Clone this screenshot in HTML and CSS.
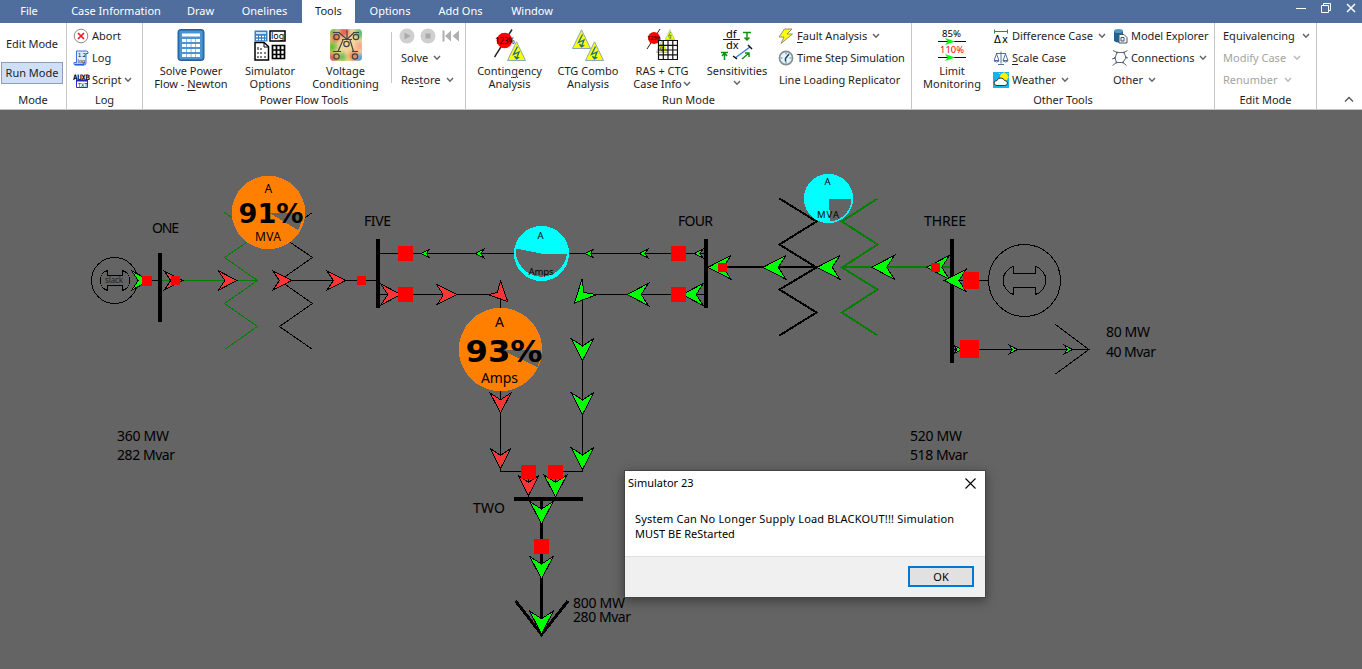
FILE: index.html
```html
<!DOCTYPE html>
<html lang="en">
<head>
<meta charset="utf-8">
<title>Simulator 23</title>
<link rel="stylesheet" href="styles.css">
</head>
<body>
<svg class="defs" width="0" height="0">
  <defs>
    <symbol id="chev" viewBox="0 0 8 6"><path d="M1 1 4 4.2 7 1" fill="none" stroke="currentColor" stroke-width="1.5"/></symbol>
    <symbol id="bolt" viewBox="0 0 19 20"><path d="M9.5.8 18.5 19.5H.5Z" fill="#ff0" stroke="#8aa7b5"/><path d="M10.500 5.500 6.500 13.500 12 11 9.500 17.500M7.500 15 9.500 17.800l2.800-1.600" fill="none" stroke="#246a86" stroke-width="1.300"/></symbol>
  </defs>
</svg>
<div class="app">
  <nav class="tabs">
    <div class="tab t-file">File</div>
    <div class="tab t-case">Case Information</div>
    <div class="tab t-draw">Draw</div>
    <div class="tab t-one">Onelines</div>
    <div class="tab t-tools active">Tools</div>
    <div class="tab t-opt">Options</div>
    <div class="tab t-add">Add Ons</div>
    <div class="tab t-win">Window</div>
    <svg class="winctl" width="66" height="23" viewBox="0 0 66 23" fill="none" stroke="#fff"><path d="M0 8.500H10M25.500 5.500h7v7h-7zM27.500 5V3.500h7v7H33"/><path d="m51 4 8 8m0-8-8 8" stroke-width="1.500"/></svg>
  </nav>
  <div class="ribbon">
    <section class="group g-mode">
      <div class="body modes">
        <div class="mode">Edit Mode</div>
        <div class="mode on">Run Mode</div>
      </div>
      <div class="title">Mode</div>
    </section>
    <section class="group g-log">
      <div class="body">
        <div class="rows c-log">
          <div class="row"><svg width="16" height="16"><circle cx="8" cy="8" r="6.800" fill="#fff" stroke="#888"/><path d="m5 5 6 6m0-6-6 6" stroke="#f01820" stroke-width="1.700"/></svg><span>Abort</span></div>
          <div class="row"><svg width="16" height="16"><path d="M3.500 1h10q2 0 1.500 2.500h-2V13q0 2-2 2H2q-1.500 0-1-2.500h2.500z" fill="#dfe9ff" stroke="#3b6fe0"/><path d="M2 14.500h9" stroke="#2b5fd8" stroke-width="1.500"/><text x="5" y="7" class="mini">1.2</text><text x="4.500" y="13" class="mini">log</text></svg><span>Log</span></div>
          <div class="row tight"><svg width="18" height="16"><text x="0" y="7.500" class="aux" textLength="17">AUXB</text><path d="M3.500 8.500h11v7h-11z" fill="#fff" stroke="#33c"/><path d="M3 8.500h12" stroke="#22c" stroke-width="2"/><text x="5" y="14.500" class="mini">TXT</text></svg><span>Script</span><svg class="chev" width="8" height="6"><use href="#chev"/></svg></div>
        </div>
      </div>
      <div class="title">Log</div>
    </section>
    <section class="group g-power">
      <div class="body">
        <div class="big b-solve">
          <svg width="32" height="32"><rect x="3" y=".5" width="26" height="31" rx="2.500" fill="#2f76b8" stroke="#25609a"/><rect x="4.500" y="2" width="23" height="28" rx="1" fill="#4d94d2"/><path d="M7 4.500h18v3H7zM7 10h4v3H7zm4.700 0h4v3h-4zm4.700 0h4v3h-4zm4.600 0h4v3h-4zM7 15h4v3H7zm4.700 0h4v3h-4zm4.700 0h4v3h-4zm4.600 0h4v3h-4zM7 20h4v3H7zm4.700 0h4v3h-4zm4.700 0h4v3h-4zm4.600 0h4v3h-4zM7 25h4v3H7zm4.700 0h4v3h-4zm4.700 0h4v3h-4zm4.600 0h4v3h-4z" fill="#fff"/></svg>
          <span>Solve Power</span><span>Flow - <u>N</u>ewton</span>
        </div>
        <div class="big b-sim">
          <svg width="32" height="32"><rect x=".5" y="1.500" width="13" height="11" fill="#3b80c3"/><path d="M2 4h10" stroke="#fff" stroke-width="1.500"/><path d="M2 7.500h10M2 10.500h10" stroke="#fff" stroke-width="1.500" stroke-dasharray="2 1"/><rect x="16" y="2" width="15" height="10" fill="#fff" stroke="#000" stroke-width="1.500"/><text x="17" y="9.500" class="logtxt">log</text><path d="M1 13.500h9l4.500 4V31H1z" fill="#fff" stroke="#000" stroke-width="1.500"/><path d="M10 13.500v4.500h4.500" fill="none" stroke="#000"/><path d="M4 18v3m3-2v2M4 23v2m3-2v2m4-2v2M4 27v2m3-2v2m4-2v2" stroke="#000"/><path d="M18.500 16.500h12v13h-12zM22.500 16v14M26.500 16v14M18 21h13M18 25.500h13" fill="none" stroke="#000" stroke-width="1.700"/></svg>
          <span>Simulator</span><span>Options</span>
        </div>
        <div class="big b-volt">
          <svg width="32" height="32"><defs><filter id="vb" x="-50%" y="-50%" width="200%" height="200%"><feGaussianBlur stdDeviation="2"/></filter><clipPath id="vc"><rect width="32" height="32" rx="4"/></clipPath></defs><g clip-path="url(#vc)"><rect width="32" height="32" fill="#f3d79a"/><g filter="url(#vb)"><circle cx="2" cy="18" r="5" fill="#5cbf3a"/><circle cx="30" cy="4" r="5" fill="#58c070"/><circle cx="14" cy="3" r="5" fill="#f0584c"/><circle cx="12" cy="28" r="4" fill="#56bb45"/><circle cx="24" cy="27" r="5" fill="#f07a45"/><circle cx="3" cy="3" r="4" fill="#5cb750"/><circle cx="5" cy="9" r="4" fill="#e2604c"/><circle cx="30" cy="17" r="4" fill="#f4a090"/><circle cx="31" cy="30" r="5" fill="#38a8e0"/><circle cx="2" cy="29" r="5" fill="#e05858"/></g></g><g fill="none" stroke="#444" stroke-width="1.200"><circle cx="6.500" cy="8" r="2.700"/><circle cx="26" cy="8" r="2.700"/><circle cx="16.500" cy="15" r="2.700"/><circle cx="6.500" cy="27.500" r="2.700"/><circle cx="25" cy="27.500" r="2.700"/><path d="M3 3.500h7m13 0h6M12 10.500h10M3 22.500h8m11 0h6M9 3.500l8 7L24 3.500M13 11 8 22.500M20 11l3.500 11.500M17 1v9"/></g></svg>
          <span>Voltage</span><span>Conditioning</span>
        </div>
        <div class="rows c-run">
          <div class="row media"><svg width="62" height="16"><circle cx="8" cy="8" r="7.500" fill="#cfcfcf"/><path d="M5.500 4.500v7l6-3.500z" fill="#aaa"/><circle cx="29" cy="8" r="7.500" fill="#cfcfcf"/><path d="M26.500 5.500h5v5h-5z" fill="#aaa"/><path d="M43.500 2.500h2v11h-2zM52 2.500v11L46 8zm8 0v11L53.500 8z" fill="#b0b0b0"/></svg></div>
          <div class="row"><span>Solve</span><svg class="chev" width="8" height="6"><use href="#chev"/></svg></div>
          <div class="row"><span>Res<u>t</u>ore</span><svg class="chev" width="8" height="6"><use href="#chev"/></svg></div>
        </div>
      </div>
      <div class="title">Power Flow Tools</div>
    </section>
    <section class="group g-run">
      <div class="body">
        <div class="big b-ctg">
          <svg width="32" height="32"><path d="M.5 28 18 .5" stroke="#222" stroke-width="1.500"/><circle cx="10.500" cy="11.500" r="7.800" fill="red"/><text x="1" y="14.500" class="pct" textLength="20">123%</text><use href="#bolt" x="13" y="12" width="19" height="20"/></svg>
          <span>Contin<u>g</u>ency</span><span>Analysis</span>
        </div>
        <div class="big b-combo">
          <svg width="32" height="32"><use href="#bolt" x="0" y="0" width="19" height="20"/><use href="#bolt" x="13" y="12" width="19" height="20"/></svg>
          <span>CTG Combo</span><span>Analysis</span>
        </div>
        <div class="big b-ras">
          <svg width="32" height="32"><path d="M1 20 14 0" stroke="#222"/><use href="#bolt" x="19" y="0" width="10" height="11"/><use href="#bolt" x="10" y="11" width="12" height="13"/><circle cx="8" cy="9" r="6" fill="red"/><text x="1" y="11" class="pct2" textLength="14">123%</text><path d="M12.500 11.500h19v19h-19zM17.300 11v20M22 11v20M26.800 11v20M12 16.300h20M12 21h20M12 25.800h20" fill="none" stroke="#111" stroke-width="1.200"/></svg>
          <span>RAS + CTG</span><span>Case Info<svg class="inchev" width="8" height="6"><use href="#chev"/></svg></span>
        </div>
        <div class="big b-sens">
          <svg class="over-ok" width="32" height="32"><text x="5" y="8.500" class="df">df</text><text x="5" y="20" class="df">dx</text><path d="M2 10.500h17" stroke="#222"/><path d="M22 3.500h8M26 4v7m-2.500-2.500L26 11l2.500-2.500M0 23.500h7M3.500 31v-7m-2.500 3 2.500-3 2.500 3M21 30l7-6m-4 0h4v4" fill="none" stroke="#109010" stroke-width="1.500"/><path d="M14 29 29 18" stroke="#4080d0" stroke-width="1.500"/><path d="m12 27 4 3m11-14 4 4" stroke="#111" stroke-width="1.500"/></svg>
          <span>Sensitivities</span><span><svg class="subchev" width="8" height="6"><use href="#chev"/></svg></span>
        </div>
        <div class="rows c-fault">
          <div class="row lead"><svg width="16" height="16"><path d="M6.500 1 1 9h5l-3 6.500L14.500 6H9l5-5z" fill="#ff0" stroke="#777" stroke-width=".8"/></svg><span><u>F</u>ault Analysis</span><svg class="chev" width="8" height="6"><use href="#chev"/></svg></div>
          <div class="row lead"><svg width="16" height="16"><circle cx="8" cy="8" r="6.600" fill="#e8f3fa" stroke="#8a8a8a" stroke-width="1.600"/><path d="M8 2.500v2M8 11.500v2M2.500 8h2M11.500 8h2" stroke="#4a90b8"/><path d="m11 4-3.500 4.500v3" stroke="#1d4a68" stroke-width="1.500" fill="none"/></svg><span class="snug">Time Step Simulation</span></div>
          <div class="row"><span>Line Loading Replicator</span></div>
        </div>
      </div>
      <div class="title">Run Mode</div>
    </section>
    <section class="group g-other">
      <div class="body">
        <div class="big b-limit">
          <svg width="32" height="32"><path d="M2 12.500h28M2 28.500h28" stroke="#111" stroke-width="1.200"/><path d="m9 9 10 3.500L9 16l2.500-3.500zM9 25l10 3.500L9 32l2.500-3.500z" fill="#0f0"/><text x="6" y="8" class="lim" textLength="19" lengthAdjust="spacingAndGlyphs">85%</text><text x="4" y="24" class="lim over" textLength="24" lengthAdjust="spacingAndGlyphs">110%</text></svg>
          <span>Limit</span><span>Monitoring</span>
        </div>
        <div class="rows c-diff">
          <div class="row"><svg width="16" height="16"><path d="M1.500 3.500h13M1.500 1.500v4m13-4v4" stroke="#2c8a45" fill="none"/><text x="1" y="15" class="dx" textLength="14">Δx</text></svg><span>Difference Case</span><svg class="chev" width="8" height="6"><use href="#chev"/></svg></div>
          <div class="row"><svg width="16" height="16" fill="none" stroke="#52709f"><path d="M8 1.500v12M3 3.500h10M3.500 4 1 10.500h5zM12.500 4 10 10.500h5zM5 14.500h6"/><path d="M1 11q2.500 2 5 0m4 0q2.500 2 5 0" /></svg><span><u>S</u>cale Case</span></div>
          <div class="row"><svg width="16" height="16"><path d="M0 0h16v16H0z" fill="#12b5ef"/><circle cx="11" cy="5" r="4" fill="#fff200"/><path d="m11 0v1m4.500 0-1 1M6 1l1 1m9 3h-1" stroke="#fff200"/><path d="M4 13.500q-3 0-3-2.500t3-2.500q1-3 4-2.500t3.500 2.500q3 0 3 2.500t-3 2.500z" fill="#fff" stroke="#333"/></svg><span>Weather</span><svg class="chev" width="8" height="6"><use href="#chev"/></svg></div>
        </div>
        <div class="rows c-model">
          <div class="row"><svg width="15" height="16"><path d="M1 3v10q4.500 3 9 0V3z" fill="#1f6293"/><ellipse cx="5.500" cy="3" rx="4.500" ry="2" fill="#5297c2"/><path d="M6 6.500h5l3 3V15H6z" fill="#f3f6f8" stroke="#4b5966"/><path d="M8 13V9.500h3V13z" fill="none" stroke="#4b5966"/></svg><span class="snug">Model Explorer</span></div>
          <div class="row lead"><svg width="16" height="16" fill="none" stroke="#555" stroke-width=".9"><path d="M5 2.500 12 2.500 14 7.500 11 12.500H4.500L3 8ZM5 2.500 1 .5M12 2.500l3.500-2M14 7.500l2 .5M4.500 12.500 .5 15.500M11 12.500l3.500 3M3 8 0 9"/><path d="M5 2.500v.1M12 2.500v.1M3 8v.1M14 7.500v.1M4.500 12.500v.1M11 12.500v.1" stroke="#3d69a8" stroke-width="1.800" stroke-linecap="round"/></svg><span class="snug">Connections</span><svg class="chev" width="8" height="6"><use href="#chev"/></svg></div>
          <div class="row"><span>Other</span><svg class="chev" width="8" height="6"><use href="#chev"/></svg></div>
        </div>
      </div>
      <div class="title">Other Tools</div>
    </section>
    <section class="group g-edit">
      <div class="body">
        <div class="rows c-equiv">
          <div class="row"><span>Equivalencing</span><svg class="chev" width="8" height="6"><use href="#chev"/></svg></div>
          <div class="row off"><span>Modify Case</span><svg class="chev" width="8" height="6"><use href="#chev"/></svg></div>
          <div class="row off"><span>Renumber</span><svg class="chev" width="8" height="6"><use href="#chev"/></svg></div>
        </div>
      </div>
      <div class="title">Edit Mode</div>
    </section>
    <svg class="collapse" width="10" height="7"><path d="m1 5.500 4-4 4 4" fill="none" stroke="#555" stroke-width="1.300"/></svg>
  </div>
  <main class="canvas">
    <svg class="oneline" width="1362" height="559" viewBox="0 110 1362 559">
      <defs><path id="arr" d="M0 0-1-.52-.66 0-1 .52Z" vector-effect="non-scaling-stroke"/></defs>
      <g class="wire">
        <circle cx="114.500" cy="280.500" r="23"/>
        <path d="M107.500 270.500A10.500 10.500 0 0 0 107.500 290.500V285.500H122.500V290.500A10.500 10.500 0 0 0 122.500 270.500V275.500H107.500Z"/>
        <circle cx="1024.500" cy="280.500" r="36"/>
        <path d="M1013.500 266.500A14 14.500 0 0 0 1013.500 294.500V287.500H1035.500V294.500A14 14.500 0 0 0 1035.500 266.500V273.500H1013.500Z"/>
        <path d="M137 280.500H160M312.500 212.500 279.500 235 312.500 257.500 279.500 280.500 312.500 303.500 279.500 326.500 312 349M280 280.500H378"/>
        <path d="M380 253.500H706M380 294.500H500.500V471.500H528.500V498M706 294.500H582.500V471.500H555.500V498M954 280.500H988M954 349.500H1089M1055.500 324.500 1089 349.500 1055.500 374"/>
        <path class="green" d="M160 280.500H257M224.500 212.500 257.500 235 224.500 257.500 257.500 280.500 224.500 303.500 257.500 326.500 225.500 349"/>
        <path class="w2" d="M708 267H816M779.500 198.500 816.500 221.500 779.500 244.500 816.500 267.500 779.500 289.500 816.500 312.500 779.500 335.500"/>
        <path class="w2 green" d="M842 267H952M877.500 198.500 842 221.500 877.500 244.500 842 267.500 877.500 289.500 842 312.500 877.500 335.500"/>
        <path class="w3" d="M541.500 500V634M515.700 601 541.500 634.500 568 601"/>
      </g>
      <path d="M158 253h4v69h-4zM376 239h4v69h-4zM704 239h4v69h-4zM950 239h4v124h-4zM514 497h69v4h-69z"/>
      <g class="arrow redarrow">
        <use href="#arr" transform="translate(182.500 280.500) scale(18)"/>
        <use href="#arr" transform="translate(237 280.500) scale(18.500)"/>
        <use href="#arr" transform="translate(291.500 280.500) scale(18.500)"/>
        <use href="#arr" transform="translate(345.500 280.500) scale(18.500)"/>
        <use href="#arr" transform="translate(401 294.500) scale(20)"/>
        <use href="#arr" transform="translate(456.500 294.500) scale(20.500)"/>
        <use href="#arr" transform="translate(500.500 413) rotate(90) scale(20)"/>
        <use href="#arr" transform="translate(500.500 468.500) rotate(90) scale(20)"/>
        <use href="#arr" transform="translate(528.500 495.500) rotate(90) scale(20)"/>
        <path d="M507.700 301.500 500.500 281 497.300 292.500 488 294.700Z"/>
      </g>
      <g class="arrow greenarrow">
        <use href="#arr" transform="translate(150 280.500) scale(18)"/>
        <use href="#arr" transform="translate(582.500 360.500) rotate(90) scale(22)"/>
        <use href="#arr" transform="translate(582.500 414.500) rotate(90) scale(22)"/>
        <use href="#arr" transform="translate(582.500 469.500) rotate(90) scale(22)"/>
        <use href="#arr" transform="translate(555.500 497) rotate(90) scale(22)"/>
        <use href="#arr" transform="translate(541.500 524) rotate(90) scale(22.500)"/>
        <use href="#arr" transform="translate(541.500 579) rotate(90) scale(22.500)"/>
        <use href="#arr" transform="translate(541.500 634) rotate(90) scale(23)"/>
        <path d="M574.500 303 582 279 584 292.500 596.700 294.700Z"/>
        <use href="#arr" transform="translate(708 267.300) rotate(180) scale(23)"/>
        <use href="#arr" transform="translate(763 267.300) rotate(180) scale(23)"/>
        <use href="#arr" transform="translate(817 267.300) rotate(180) scale(23)"/>
        <use href="#arr" transform="translate(871.500 267.300) rotate(180) scale(23)"/>
        <use href="#arr" transform="translate(926.500 267.300) rotate(180) scale(23)"/>
        <use href="#arr" transform="translate(627 294.500) rotate(180) scale(21.500)"/>
        <use href="#arr" transform="translate(682 294.500) rotate(180) scale(21.500)"/>
        <use href="#arr" transform="translate(944.500 280.500) rotate(180) scale(22)"/>
        <use href="#arr" transform="translate(421 253.500) rotate(180) scale(8.500)"/>
        <use href="#arr" transform="translate(475.500 253.500) rotate(180) scale(8.500)"/>
        <use href="#arr" transform="translate(585 253.500) rotate(180) scale(8.500)"/>
        <use href="#arr" transform="translate(639.500 253.500) rotate(180) scale(8.500)"/>
        <use href="#arr" transform="translate(694.500 253.500) rotate(180) scale(8.500)"/>
        <use href="#arr" transform="translate(962 349.500) scale(8)"/>
        <use href="#arr" transform="translate(1017.500 349.500) scale(8)"/>
        <use href="#arr" transform="translate(1072.500 349.500) scale(8)"/>
      </g>
      <path class="breaker" d="M142 276h10v10h-10zM171 276h9v9h-9zM357 276h9v9h-9zM398 246h15v15h-15zM398 287h15v15h-15zM671 246h15v15h-15zM671 287h15v15h-15zM718 263h9v9h-9zM931 263h9v9h-9zM963 272h16v17h-16zM960 340h19v18h-19zM521 465h15v14h-15zM548 465h15v14h-15zM534 539h15v15h-15z"/>
      <circle class="hot" cx="268.500" cy="212.500" r="36.700"/>
      <path class="void" d="M268.500 212.500H302.500A34 34 0 0 1 298 230Z"/>
      <circle class="hot" cx="500.500" cy="349.500" r="41.700"/>
      <path class="void" d="M500.500 349.500H541A40.500 40.500 0 0 1 537.500 367Z"/>
      <circle class="cool" cx="541.500" cy="253.500" r="27.500"/>
      <path class="void" d="M541.500 253.500H567A25.500 25.500 0 1 1 516 248.500Z"/>
      <circle class="cool" cx="828.500" cy="198.500" r="24.700"/>
      <path class="void" d="M829 198.500H851.500A23 23 0 0 1 830 221.500Z"/>
      <g class="lbl">
        <text x="152" y="233" textLength="27">ONE</text>
        <text x="364" y="226" textLength="27">FIVE</text>
        <text x="678" y="226" textLength="35">FOUR</text>
        <text x="924" y="226" textLength="42">THREE</text>
        <text x="473" y="513" textLength="32">TWO</text>
        <text x="1106" y="337" textLength="44">80 MW</text>
        <text x="1106" y="357" textLength="50">40 Mvar</text>
        <text x="117" y="441" textLength="52">360 MW</text>
        <text x="117" y="460" textLength="58">282 Mvar</text>
        <text x="910" y="441" textLength="52">520 MW</text>
        <text x="910" y="460" textLength="58">518 Mvar</text>
        <text x="573" y="608" textLength="52">800 MW</text>
        <text x="573" y="622" textLength="58">280 Mvar</text>
        <text x="495" y="327" textLength="9">A</text>
        <text x="481" y="383" textLength="37">Amps</text>
      </g>
      <g class="lbl mid">
        <text x="264.500" y="193">A</text>
        <text x="255" y="241" textLength="26">MVA</text>
      </g>
      <g class="lbl small">
        <text x="537.500" y="239">A</text>
        <text x="528.500" y="275" textLength="25">Amps</text>
        <text x="824.500" y="185">A</text>
        <text x="817" y="218" textLength="22">MVA</text>
      </g>
      <text class="slack" x="105" y="283" textLength="18">slack</text>
      <text class="load l91" x="238.500" y="223" textLength="65" lengthAdjust="spacingAndGlyphs">91%</text>
      <text class="load l93" x="465.500" y="362" textLength="77" lengthAdjust="spacingAndGlyphs">93%</text>
    </svg>
    <div class="dialog">
      <div class="dlg-head"><span>Simulator 23</span><svg width="11" height="11"><path d="m.5.500 10 10m0-10-10 10" stroke="#000" stroke-width="1.100"/></svg></div>
      <div class="dlg-msg"><div class="m1">System Can No Longer Supply Load BLACKOUT!!! Simulation</div><div>MUST BE ReStarted</div></div>
      <div class="dlg-foot"><button class="ok">OK</button></div>
    </div>
  </main>
</div>
</body>
</html>
```

FILE: styles.css
```css
* { box-sizing: border-box; }
body { margin: 0; font-family: "Noto Sans", "Open Sans", sans-serif; font-size: 11px; color: #1e1e1e; }
.defs { position: absolute; }
.app { width: 1362px; height: 669px; display: flex; flex-direction: column; overflow: hidden; }
.app svg { flex: none; }
.tabs { height: 23px; background: #4f6d9d; display: flex; color: #fff; line-height: 22px; }
.tab { text-align: center; white-space: nowrap; flex: none; }
.tab.active { background: #fff; color: #1e1e1e; }
.t-file { width: 58px; }
.t-case { width: 116px; }
.t-draw { width: 53px; }
.t-one { width: 75px; }
.t-tools { width: 53px; }
.t-opt { width: 70px; }
.t-add { width: 71px; }
.t-win { width: 72px; }
.winctl { margin-left: auto; }
.ribbon { height: 87px; flex: none; background: #fff; display: flex; border-bottom: 1px solid #c6c6c6; white-space: nowrap; }
.group { border-right: 1px solid #c6c6c6; padding-top: 2px; flex: none; }
.g-mode { width: 67px; }
.g-log { width: 76px; }
.g-power { width: 323px; }
.g-run { width: 446px; }
.g-other { width: 303px; }
.g-edit { width: 102px; }
.body { height: 66px; display: flex; }
.title { height: 18px; line-height: 18px; text-align: center; }
.modes { flex-direction: column; padding: 8px 3px 0 1px; gap: 7px; }
.mode { height: 22px; line-height: 20px; text-align: center; border: 1px solid transparent; }
.mode.on { background: #cfdff8; border-color: #8c9dbb; }
.rows { display: grid; grid-template-rows: repeat(3, 22px); flex: none; }
.row { display: flex; align-items: center; gap: 3px; }
.row span { margin-bottom: 2px; }
.row.tight { gap: 1px; }
.row.lead > svg:first-child { margin-left: -1px; }
.snug { letter-spacing: -.08px; }
.row u, .big u { text-underline-offset: 2px; }
.chev { color: #666; margin-left: 2px; }
.off { color: #a3a3a3; }
.off .chev { color: #bbb; }
.big { display: flex; flex-direction: column; align-items: center; padding-top: 4px; line-height: 13px; flex: none; }
.big > svg { margin-bottom: 3px; }
.inchev { color: #666; margin-left: 1px; vertical-align: 1px; }
.subchev { color: #666; vertical-align: 2px; }
.over-ok { overflow: visible; }
.c-log { padding-left: 6px; }
.b-solve { width: 96px; }
.b-sim { width: 62px; }
.b-volt { width: 89px; }
.c-run { padding-left: 11px; position: relative; }
.c-run::before { content: ""; position: absolute; left: 0; top: 7px; height: 51px; border-left: 1px solid #c6c6c6; margin-left: 1px; }
.media { margin-left: -2px; }
.b-ctg { width: 87px; }
.b-combo { width: 70px; }
.b-ras { width: 78px; }
.b-sens { width: 72px; }
.c-fault { padding-left: 6px; }
.b-limit { width: 80px; }
.c-diff { padding-left: 1px; width: 121px; }
.c-equiv { padding-left: 8px; }
.c-equiv .chev { margin-left: 4px; }
.collapse { margin: 73px 8px 0 auto; }
.mini { font: 5px "DejaVu Sans"; fill: #000; }
.aux { font: bold 7.500px "DejaVu Sans Mono"; fill: #000; }
.logtxt { font: 9px "Noto Sans"; }
.pct { font: 8px "Noto Sans"; }
.pct2 { font: 6px "Noto Sans"; }
.df { font: 11px "Noto Sans"; }
.lim { font: 9px "Noto Sans"; }
.over { fill: red; }
.dx { font: 10px "DejaVu Sans"; }
.canvas { flex: 1; background: #646464; position: relative; }
.oneline { display: block; shape-rendering: crispEdges; }
.wire { fill: none; stroke: #000; stroke-width: 1; }
.green { stroke: #008000; }
.w2 { stroke-width: 2; }
.w3 { stroke-width: 3; }
.arrow { stroke: #000; stroke-width: 1; }
.redarrow { fill: #ff3535; }
.greenarrow { fill: #0f0; }
.breaker { fill: red; }
.hot { fill: #ff8000; }
.cool { fill: #0ff; }
.void { fill: #646464; }
.lbl { font: 14px "Noto Sans"; }
.mid { font-size: 12px; }
.small { font-size: 9.500px; }
.slack { font: 8px "Noto Sans"; fill: #222; }
.load { font-family: "DejaVu Sans"; font-weight: bold; }
.l91 { font-size: 26.500px; }
.l93 { font-size: 31px; }
.dialog { position: absolute; left: 625px; top: 361px; width: 360px; height: 126px; background: #fff; color: #000; display: flex; flex-direction: column; box-shadow: 0 0 0 1px #444, 0 3px 10px 1px rgba(0,0,0,.4); }
.dlg-head { height: 24px; padding: 0 9px 0 3px; display: flex; align-items: center; justify-content: space-between; }
.dlg-head span { margin-bottom: 2px; }
.dlg-msg { flex: 1; padding: 16px 0 0 10px; line-height: 15px; white-space: nowrap; }
.m1 { letter-spacing: .18px; }
.dlg-foot { height: 41px; border-top: 1px solid #dfdfdf; background: #f0f0f0; padding: 9px 11px 0 0; display: flex; justify-content: flex-end; }
.ok { width: 66px; height: 21px; border: 2px solid #0078d7; background: #e1e1e1; font: inherit; padding: 0; line-height: 16px; color: #000; }
```
